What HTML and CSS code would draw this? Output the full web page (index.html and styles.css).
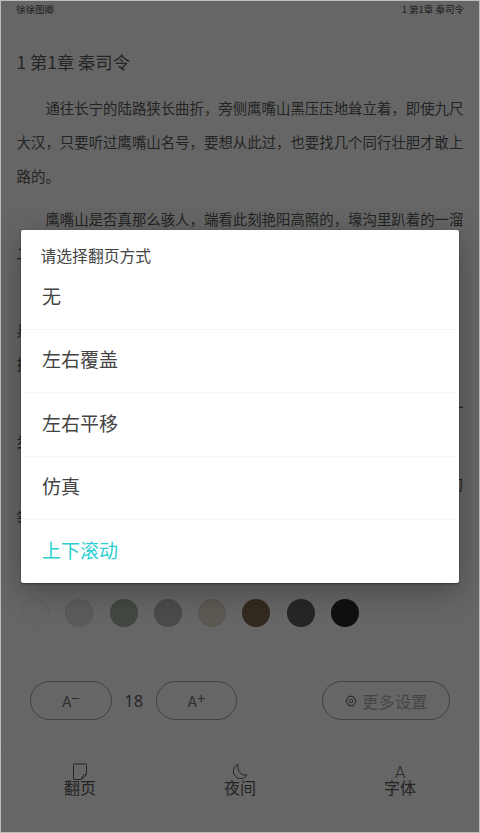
FILE: index.html
```html
<!DOCTYPE html>
<html lang="zh-CN">
<head>
<meta charset="utf-8">
<title>翻页方式</title>
<link rel="stylesheet" href="styles.css">
</head>
<body>
<div class="reader">
  <header class="statusline">
    <span>徐徐图卿</span>
    <span>1 第1章 秦司令</span>
  </header>
  <main class="page">
    <h1 class="chapter">1 第1章 秦司令</h1>
    <p>通往长宁的陆路狭长曲折，旁侧鹰嘴山黑压压地耸立着，即使九尺大汉，只要听过鹰嘴山名号，要想从此过，也要找几个同行壮胆才敢上路的。</p>
    <p>鹰嘴山是否真那么骇人，端看此刻艳阳高照的，壕沟里趴着的一溜二十来个汉子，个个面色黝黑，一身短打。</p>
    <p>这些人手里都握着刀，眼睛死死盯着山下那条小路，谁也不出声，具体要等的是什么人，大当家并没有说，只吩咐了一句话，务必拿下，挂在腰间的水囊早已空了，也没人敢起身。</p>
    <p>这一趟他们等了足足三天，日头晒得人头昏眼花，可谁也没有挪一步，只等着那一声号令。</p>
    <p>突然远处传来了一阵马蹄声，众人精神都为之一振，握紧手中的刀等待着来人靠近。</p>
  </main>
  <section class="settings">
    <div class="swatches">
      <span class="swatch s1"></span>
      <span class="swatch s2"></span>
      <span class="swatch s3"></span>
      <span class="swatch s4"></span>
      <span class="swatch s5"></span>
      <span class="swatch s6"></span>
      <span class="swatch s7"></span>
      <span class="swatch s8"></span>
    </div>
    <div class="fontrow">
      <button class="pill pill-size">A<span class="sign">−</span></button>
      <span class="size">18</span>
      <button class="pill pill-size">A<span class="sign">+</span></button>
      <button class="pill pill-more">
        <svg class="gear" viewBox="0 0 12 12" width="12" height="12" aria-hidden="true">
          <path d="M3.6 1.4h4.8L11 6l-2.6 4.6H3.6L1 6z" fill="none" stroke="currentColor" stroke-width="1.1" stroke-linejoin="round"/>
          <circle cx="6" cy="6" r="1.7" fill="none" stroke="currentColor" stroke-width="1"/>
        </svg>
        更多设置
      </button>
    </div>
  </section>
  <nav class="tabs">
    <div class="tab">
      <svg class="tab-icon" viewBox="0 0 16 18" width="16" height="18" aria-hidden="true">
        <path d="M3 1h10a1.500 1.500 0 0 1 1.500 1.500v9L9.500 16.500H3A1.500 1.500 0 0 1 1.500 15V2.500A1.500 1.500 0 0 1 3 1z" fill="none" stroke="currentColor" stroke-width="1"/>
        <path d="M14.500 11.500c-1.800-.5-4.500.5-5 5" fill="none" stroke="currentColor" stroke-width="1"/>
      </svg>
      <span class="tab-label">翻页</span>
    </div>
    <div class="tab">
      <svg class="tab-icon" viewBox="0 0 16 18" width="16" height="18" aria-hidden="true">
        <path d="M6 1.500A7.300 7.300 0 1 0 15 12C10 13 4.500 8.500 6 1.500z" fill="none" stroke="currentColor" stroke-width="1" stroke-linejoin="round"/>
      </svg>
      <span class="tab-label">夜间</span>
    </div>
    <div class="tab">
      <span class="tab-letter">A</span>
      <span class="tab-label">字体</span>
    </div>
  </nav>

  <div class="scrim">
    <div class="dialog">
      <div class="dialog-title">请选择翻页方式</div>
      <div class="option">无</div>
      <div class="option">左右覆盖</div>
      <div class="option">左右平移</div>
      <div class="option">仿真</div>
      <div class="option option-active">上下滚动</div>
    </div>
  </div>
</div>
</body>
</html>
```

FILE: styles.css
```css
* { box-sizing: border-box; }

html, body {
  margin: 0;
  padding: 0;
  height: 100%;
}

body {
  font-family: "Noto Sans CJK SC", "Noto Sans", sans-serif;
  background: #fff;
  overflow: hidden;
}

.reader {
  position: relative;
  width: 480px;
  height: 833px;
  display: flex;
  flex-direction: column;
  background: #fff;
  overflow: hidden;
}

.statusline {
  display: flex;
  justify-content: space-between;
  padding: 2px 16px 0;
  height: 19px;
  font-size: 9.5px;
  line-height: 14px;
  color: #4a4a4a;
}

.page {
  height: 555px;
  padding: 0 16.6px;
  overflow: hidden;
  color: #5a5a5a;
}

.chapter {
  margin: 31px 0 17px;
  font-size: 17.3px;
  font-weight: 400;
  line-height: 24px;
}

.page p {
  margin: 0 0 9px;
  font-size: 14.4px;
  line-height: 34px;
  text-indent: 2em;
  text-align: justify;
}

.settings {
  display: flex;
  flex-direction: column;
  height: 171px;
  padding: 25px 30px 0 21px;
}

.swatches {
  display: flex;
  gap: 16.3px;
  height: 28px;
}

.swatch {
  width: 28px;
  height: 28px;
  border-radius: 50%;
  border: 1px solid rgba(0, 0, 0, .05);
}

.s1 { background: #fff; }
.s2 { background: #ebe6e1; }
.s3 { background: #a8b4a2; }
.s4 { background: #bcbcbc; }
.s5 { background: #eadfd0; }
.s6 { background: #806a52; }
.s7 { background: #5f5f5f; }
.s8 { background: #2a2a2a; }

.fontrow {
  display: flex;
  align-items: center;
  margin-top: 54px;
  margin-left: 9px;
}

.pill {
  display: flex;
  align-items: center;
  justify-content: center;
  height: 39px;
  border: 1px solid #a0a0a0;
  border-radius: 19.5px;
  background: transparent;
  font-family: inherit;
  padding: 0;
}

.pill-size {
  width: 82px;
  font-size: 15px;
  color: #777;
}

.sign {
  font-size: 15px;
  line-height: 13px;
  margin-top: -7px;
}

.size {
  width: 44px;
  text-align: center;
  font-size: 16.5px;
  color: #666;
  font-family: "Noto Sans", sans-serif;
}

.pill-more {
  width: 128px;
  margin-left: 85px;
  gap: 5px;
  font-size: 16.4px;
  color: #b0b0b0;
}

.gear {
  color: #777;
}

.tabs {
  flex: 1;
  display: flex;
  border-top: 1px solid #f6f6f6;
  padding-top: 17px;
}

.tab {
  flex: 1;
  display: flex;
  flex-direction: column;
  align-items: center;
  color: #5a5a5a;
  font-size: 16px;
  line-height: 18px;
}

.tab-icon {
  display: block;
  height: 18px;
}

.tab-label {
  margin-top: -3px;
}

.tab-letter {
  font-family: "Roboto", sans-serif;
  font-size: 17px;
  line-height: 18px;
  height: 18px;
  font-weight: 300;
  color: #666;
}

.scrim {
  position: absolute;
  inset: 0;
  background: rgba(0, 0, 0, .6);
  border: 1px solid #bdbdbd;
  padding: 229px 20px 0;
}

.dialog {
  background: #fff;
  border-radius: 2px;
  box-shadow: 0 8px 32px rgba(0, 0, 0, .3), 0 1px 2px rgba(0, 0, 0, .4);
}

.dialog-title {
  height: 36px;
  padding: 16px 0 0 19.5px;
  font-size: 15.8px;
  line-height: 20px;
  color: #444;
}

.option {
  display: flex;
  align-items: center;
  height: 63.5px;
  padding: 0 0 4px 21px;
  font-size: 19px;
  color: #444;
  border-bottom: 1px solid #f6f6f6;
}

.option-active {
  height: 62.5px;
  color: #2bcfd3;
  border-bottom: none;
}
```
